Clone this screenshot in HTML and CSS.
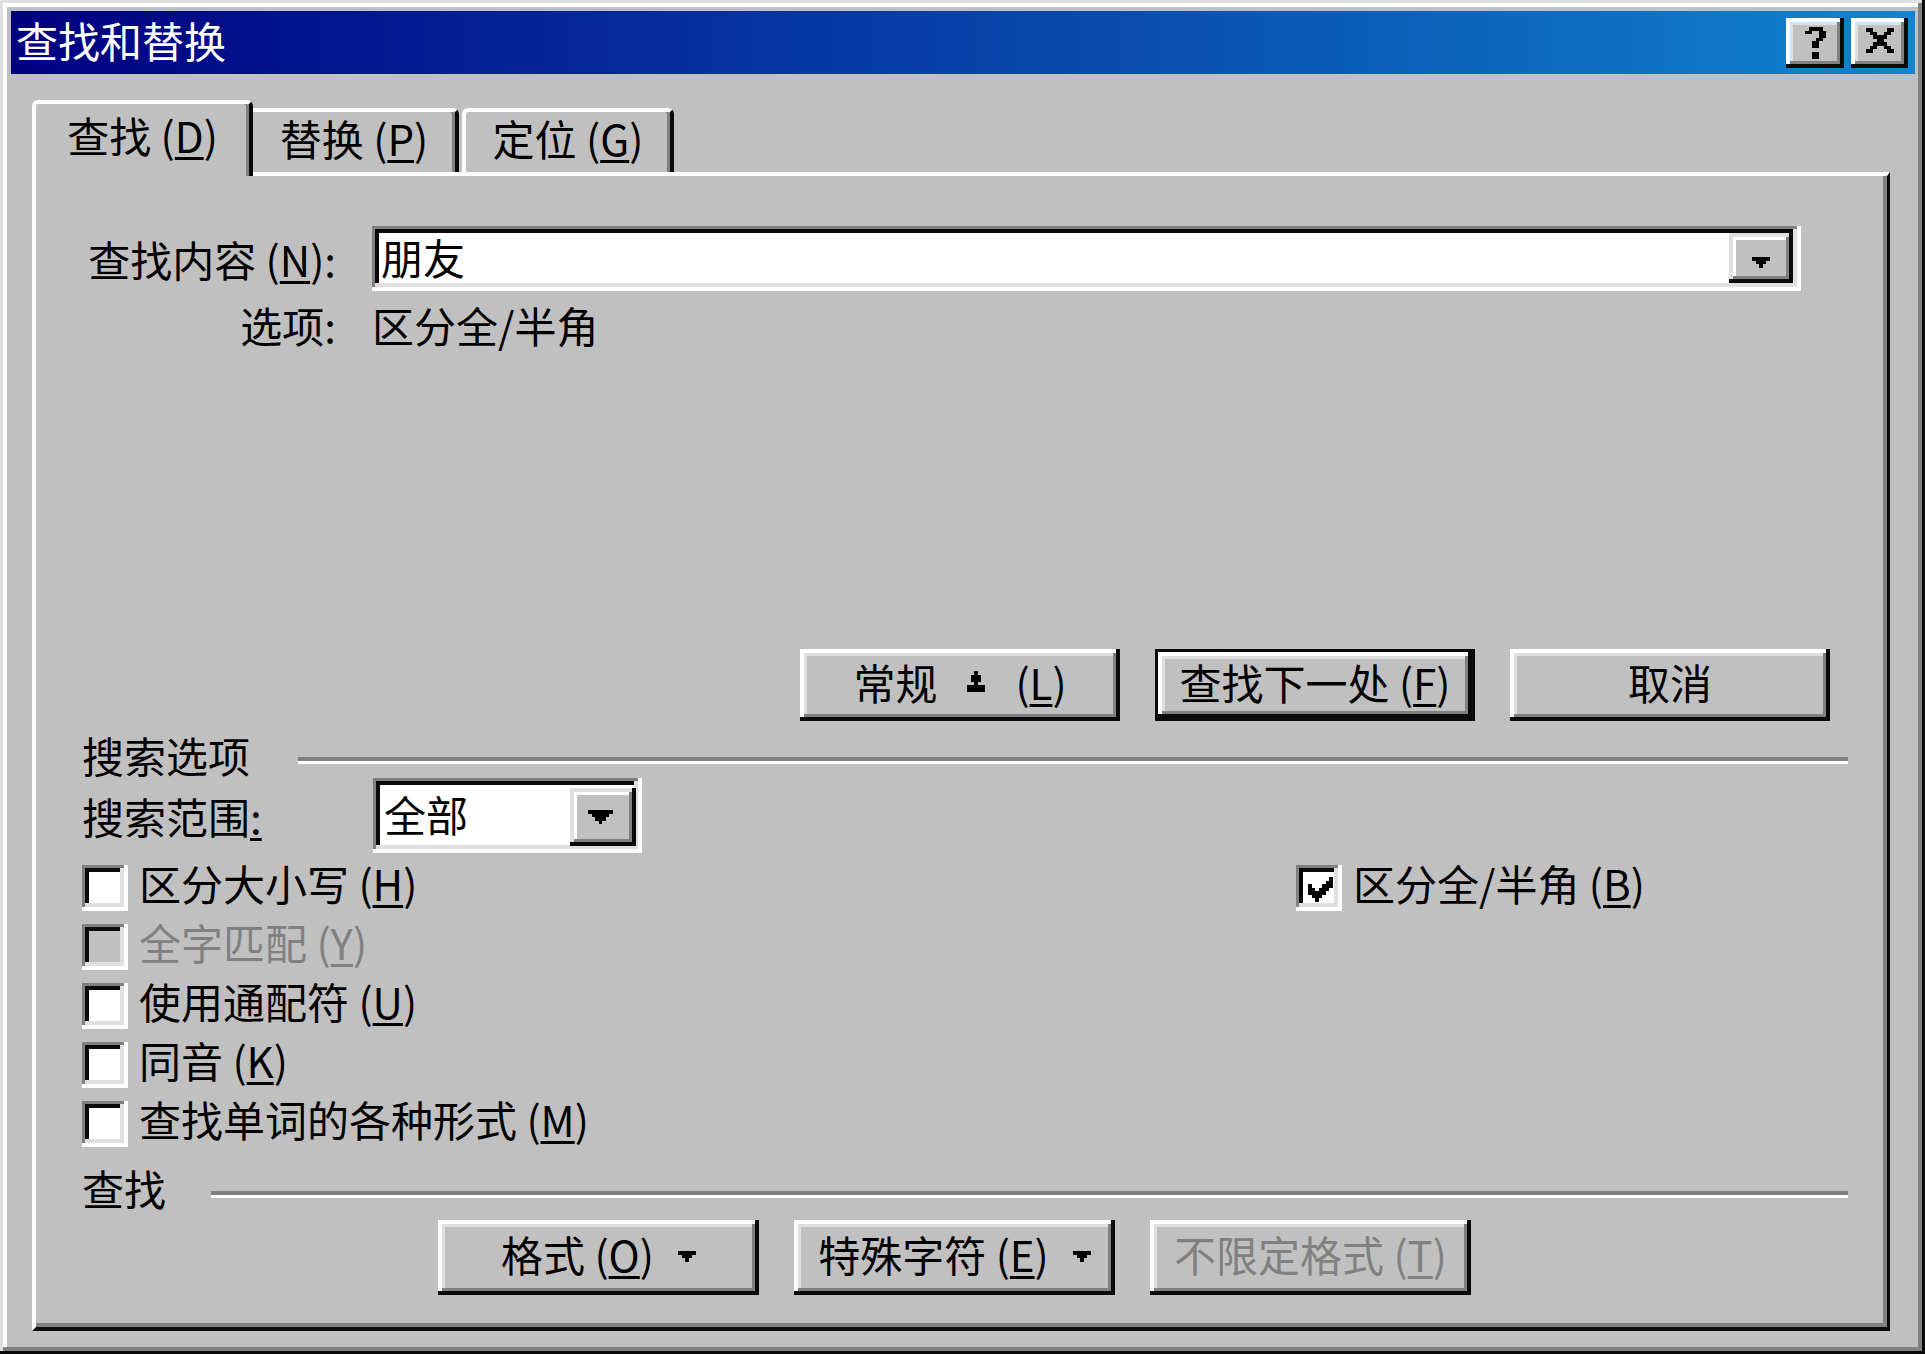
FILE: index.html
```html
<!DOCTYPE html>
<html lang="zh-CN">
<head>
  <meta charset="UTF-8" />
  <title>查找和替换</title>
  <link rel="stylesheet" href="styles.css">
</head>
<body>
  <div class="window">
    <!-- 标题栏 -->
    <div class="titlebar">
      <span class="title">查找和替换</span>
      <div class="title-btns">
        <button class="tbtn help">
          <svg width="21" height="32" viewBox="0 0 6 9" preserveAspectRatio="none" shape-rendering="crispEdges"><path d="M1 0h4v1H1zM0 1h2v1H0zM4 1h2v2H4zM3 3h2v1H3zM2 4h2v2H2zM2 7h2v2H2z" fill="#000"/></svg>
        </button>
        <button class="tbtn close">
          <svg width="28" height="25" viewBox="0 0 8 7" preserveAspectRatio="none" shape-rendering="crispEdges"><path d="M0 0h2v1H0zM6 0h2v1H6zM1 1h2v1H1zM5 1h2v1H5zM2 2h4v1H2zM3 3h2v1H3zM2 4h4v1H2zM1 5h2v1H1zM5 5h2v1H5zM0 6h2v1H0zM6 6h2v1H6z" fill="#000"/></svg>
        </button>
      </div>
    </div>

    <!-- 选项卡 -->
    <div class="tabs">
      <div class="tab active">查找 (<u>D</u>)</div>
      <div class="tab second">替换 (<u>P</u>)</div>
      <div class="tab third">定位 (<u>G</u>)</div>
    </div>

    <div class="panel">
      <div class="find-row">
        <label class="lbl">查找内容 (<u>N</u>):</label>
        <div class="combo find">
          <span class="combo-text">朋友</span>
          <span class="drop">
            <svg width="18" height="11" viewBox="0 0 5 3" preserveAspectRatio="none" shape-rendering="crispEdges"><path d="M0 0h5v1H0zM1 1h3v1H1zM2 2h1v1H2z" fill="#000"/></svg>
          </span>
        </div>
      </div>
      <div class="opt-row">
        <span class="lbl">选项:</span>
        <span>区分全/半角</span>
      </div>

      <div class="btn-row">
        <button class="btn"><span>常规</span>
          <svg class="more" width="18" height="21" viewBox="0 0 5 6" preserveAspectRatio="none" shape-rendering="crispEdges"><path d="M2 0h1v1H2zM1 1h3v2H1zM2 3h1v1H2zM0 4h5v2H0z" fill="#000"/></svg>
          <span>(<u>L</u>)</span></button>
        <button class="btn default"><span>查找下一处 (<u>F</u>)</span></button>
        <button class="btn"><span>取消</span></button>
      </div>

      <div class="group-head">
        <span>搜索选项</span>
        <span class="rule"></span>
      </div>
      <div class="scope-row">
        <span class="lbl plain">搜索范围<u>:</u></span>
        <div class="combo scope">
          <span class="combo-text">全部</span>
          <span class="drop big">
            <svg width="25" height="14" viewBox="0 0 7 4" preserveAspectRatio="none" shape-rendering="crispEdges"><path d="M0 0h7v1H0zM1 1h5v1H1zM2 2h3v1H2zM3 3h1v1H3z" fill="#000"/></svg>
          </span>
        </div>
      </div>

      <div class="checks">
        <div class="check-col">
          <div class="check"><span class="box"></span><span class="txt">区分大小写 (<u>H</u>)</span></div>
          <div class="check disabled"><span class="box off"></span><span class="txt">全字匹配 (<u>Y</u>)</span></div>
          <div class="check"><span class="box"></span><span class="txt">使用通配符 (<u>U</u>)</span></div>
          <div class="check"><span class="box"></span><span class="txt">同音 (<u>K</u>)</span></div>
          <div class="check"><span class="box"></span><span class="txt">查找单词的各种形式 (<u>M</u>)</span></div>
        </div>
        <div class="check-col right">
          <div class="check">
            <span class="box">
              <svg width="25" height="25" viewBox="0 0 7 7" shape-rendering="crispEdges"><path d="M6 0h1v3H6zM5 1h1v3H5zM4 2h1v3H4zM3 3h1v3H3zM2 4h1v3H2zM1 3h1v3H1zM0 2h1v3H0z" fill="#000"/></svg>
            </span><span class="txt">区分全/半角 (<u>B</u>)</span>
          </div>
        </div>
      </div>

      <div class="group-head find-head">
        <span>查找</span>
        <span class="rule"></span>
      </div>
      <div class="btn-row bottom">
        <button class="btn tall"><span>格式 (<u>O</u>)</span>
          <svg class="caret" width="18" height="11" viewBox="0 0 5 3" preserveAspectRatio="none" shape-rendering="crispEdges"><path d="M0 0h5v1H0zM1 1h3v1H1zM2 2h1v1H2z" fill="#000"/></svg></button>
        <button class="btn tall"><span>特殊字符 (<u>E</u>)</span>
          <svg class="caret" width="18" height="11" viewBox="0 0 5 3" preserveAspectRatio="none" shape-rendering="crispEdges"><path d="M0 0h5v1H0zM1 1h3v1H1zM2 2h1v1H2z" fill="#000"/></svg></button>
        <button class="btn tall disabled"><span>不限定格式 (<u>T</u>)</span></button>
      </div>
    </div>
  </div>
</body>
</html>
```

FILE: styles.css
```css
* {
  box-sizing: border-box;
}
body {
  margin: 0;
  background: #c0c0c0;
  font-family: "Noto Sans CJK SC", "Noto Sans", sans-serif;
  font-size: 42px;
  line-height: 42px;
  color: #000;
}
u {
  text-decoration-thickness: 3px;
  text-underline-offset: 4px;
}
button {
  font: inherit;
  color: inherit;
  border: 0;
  padding: 0;
  background: #c0c0c0;
}

.window {
  width: 1925px;
  height: 1354px;
  padding: 11px 10px 11px 11px;
  background: #c0c0c0;
  box-shadow: inset -3px -3px #0a0a0a, inset 3px 3px #dfdfdf, inset -7px -7px #808080, inset 7px 7px #fff;
}

/* title bar */
.titlebar {
  height: 63px;
  display: flex;
  align-items: center;
  justify-content: space-between;
  padding: 0 7px 0 5px;
  background: linear-gradient(90deg, #000080, #1084d0);
}
.title {
  color: #fff;
  margin-bottom: 5px;
}
.title-btns {
  display: flex;
  gap: 7px;
}
.tbtn {
  width: 58px;
  height: 50px;
  display: flex;
  align-items: center;
  justify-content: center;
  box-shadow: inset -4px -4px #0a0a0a, inset 4px 4px #fff, inset -7px -7px #808080, inset 7px 7px #dfdfdf;
}
.tbtn.close {
  width: 57px;
  padding-bottom: 5px;
}

/* tabs */
.tabs {
  display: flex;
  align-items: flex-end;
  height: 72px;
  margin: 26px 0 0 21px;
  position: relative;
  z-index: 1;
}
.tab {
  height: 64px;
  padding-top: 5px;
  text-align: center;
  background: #c0c0c0;
  border-top: 4px solid #fff;
  border-left: 4px solid #fff;
  border-right: 4px solid #0a0a0a;
  border-radius: 6px 6px 0 0;
  box-shadow: inset -3px 0 #808080;
}
.tab.active {
  width: 221px;
  height: 76px;
  padding-top: 10px;
  margin-bottom: -4px;
}
.tab.second {
  width: 206px;
  border-left: 0;
  border-top-left-radius: 0;
}
.tab.third {
  width: 212px;
  margin-left: 3px;
}

/* panel */
.panel {
  width: 1858px;
  height: 1159px;
  margin-left: 21px;
  padding-left: 46px;
  border-top: 4px solid #fff;
  border-left: 4px solid #fff;
  border-right: 3px solid #0a0a0a;
  border-bottom: 4px solid #0a0a0a;
  box-shadow: inset -4px -4px #808080;
}
.lbl {
  width: 290px;
  flex: none;
  text-align: right;
  padding-right: 36px;
}
.lbl.plain {
  width: 291px;
  text-align: left;
  padding-right: 0;
}
.find-row {
  display: flex;
  align-items: center;
  height: 65px;
  margin-top: 50px;
}
.opt-row {
  display: flex;
  align-items: center;
  height: 42px;
  margin-top: 13px;
}

/* combo boxes */
.combo {
  display: flex;
  background: #fff;
  box-shadow: inset -4px -4px #fff, inset 3px 3px #808080, inset -8px -8px #dfdfdf, inset 7px 7px #0a0a0a;
}
.combo.find {
  width: 1429px;
  height: 65px;
  padding: 7px 8px 8px 7px;
}
.combo.scope {
  width: 269px;
  height: 75px;
  padding: 10px 6px 7px 7px;
}
.combo-text {
  flex: 1;
  padding-left: 2px;
  line-height: 48px;
}
.scope .combo-text {
  padding-left: 4px;
  line-height: 52px;
}
.drop {
  width: 64px;
  display: flex;
  align-items: center;
  justify-content: center;
  padding-top: 8px;
  background: #c0c0c0;
  box-shadow: inset -4px -4px #0a0a0a, inset 4px 4px #dfdfdf, inset -7px -7px #808080, inset 7px 7px #fff;
}
.drop.big {
  width: 66px;
  padding: 0 6px 0 0;
}

/* push buttons */
.btn-row {
  display: flex;
  justify-content: flex-end;
  gap: 35px;
  margin: 303px 57px 0 0;
}
.btn {
  width: 320px;
  height: 72px;
  display: flex;
  align-items: center;
  justify-content: center;
  padding-bottom: 7px;
  box-shadow: inset -4px -4px #0a0a0a, inset 4px 4px #fff, inset -7px -7px #808080, inset 7px 7px #dfdfdf;
}
.btn svg {
  margin-top: 6px;
}
.btn.default {
  border: 3px solid #0a0a0a;
}
.btn .more {
  margin: 0 30px;
}
.btn .caret {
  margin-left: 24px;
}
.btn-row.bottom {
  justify-content: flex-start;
  margin: 11px 0 0 356px;
}
.btn.tall {
  width: 321px;
  height: 75px;
  padding-bottom: 8px;
}
.btn.disabled {
  color: #808080;
}

/* group headings */
.group-head {
  display: flex;
  height: 42px;
  margin: 13px 39px 0 0;
}
.rule {
  flex: 1;
  height: 7px;
  margin: 23px 0 0 48px;
  border-top: 4px solid #808080;
  border-bottom: 3px solid #fff;
}
.find-head {
  margin-top: 14px;
}
.find-head .rule {
  margin: 24px 0 0 45px;
}

.scope-row {
  display: flex;
  align-items: center;
  height: 75px;
  margin-top: 2px;
}

/* check boxes */
.checks {
  display: flex;
  margin-top: 5px;
}
.check-col {
  width: 1214px;
  flex: none;
}
.check-col.right {
  width: auto;
  flex: 1;
}
.check {
  display: flex;
  align-items: center;
  gap: 11px;
  height: 59px;
}
.check .txt {
  margin-bottom: 9px;
}
.check.disabled {
  color: #808080;
}
.box {
  width: 46px;
  height: 46px;
  flex: none;
  display: flex;
  align-items: center;
  justify-content: center;
  padding: 3px 0 0 3px;
  background: #fff;
  box-shadow: inset -4px -4px #fff, inset 3px 3px #808080, inset -8px -8px #dfdfdf, inset 7px 7px #0a0a0a;
}
.box.off {
  background: #c0c0c0;
}
```
